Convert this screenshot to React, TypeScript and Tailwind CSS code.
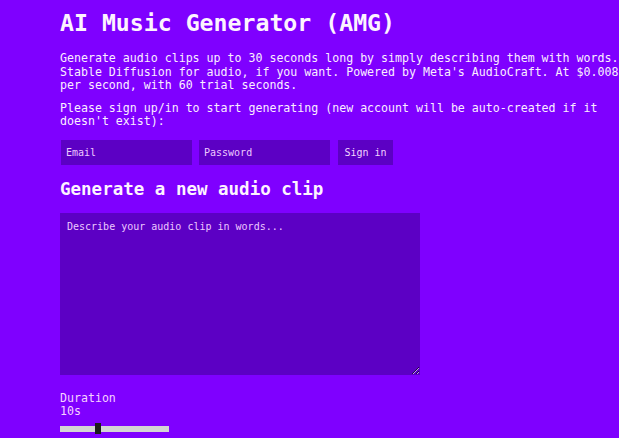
export default function App() {
  return (
    <main className="min-h-screen w-full overflow-hidden bg-[#7f00ff] text-[#fbeeff] font-['DejaVu_Sans_Mono',monospace]">
      <div className="pl-[60px] pt-[9px]">
        {/* Header */}
        <h1 className="text-[23.2px] leading-[28px] font-bold text-[#fdf3ff]">AI Music Generator (AMG)</h1>

        <p className="mt-[15px] text-[11.6px] leading-[13.6px] whitespace-nowrap">
          Generate audio clips up to 30 seconds long by simply describing them with words.
          <br />
          Stable Diffusion for audio, if you want. Powered by Meta's AudioCraft. At $0.008
          <br />
          per second, with 60 trial seconds.
        </p>

        <p className="mt-[9px] text-[11.6px] leading-[13.6px] whitespace-nowrap">
          Please sign up/in to start generating (new account will be auto-created if it
          <br />
          doesn't exist):
        </p>

        {/* Sign in */}
        <div className="mt-[11px] flex gap-[7px] pl-[1px]">
          <input
            className="w-[131px] h-[25px] bg-[#5c00c4] px-[5px] text-[10px] text-[#f2d6ff] placeholder:text-[#ecc8ff] outline-none"
            placeholder="Email"
          />
          <input
            type="password"
            className="w-[131px] h-[25px] bg-[#5c00c4] px-[5px] text-[10px] text-[#f2d6ff] placeholder:text-[#ecc8ff] outline-none"
            placeholder="Password"
          />
          <button className="ml-[1px] h-[25px] w-[55px] bg-[#5c00c4] text-[10px] text-[#f2d6ff]">Sign in</button>
        </div>

        {/* Generator */}
        <h2 className="mt-[13px] text-[17.5px] leading-[22px] font-bold text-[#fdf3ff]">Generate a new audio clip</h2>

        <textarea
          className="mt-[13px] block w-[360px] h-[162px] bg-[#5c00c4] px-[7px] py-[6px] text-[10px] text-[#f2d6ff] placeholder:text-[#ecc8ff] outline-none"
          placeholder="Describe your audio clip in words..."
        />

        <div className="mt-[17px] text-[11.6px] leading-[13px] text-[#f6d2ff]">
          <div>Duration</div>
          <div>10s</div>
        </div>

        <div className="relative mt-[8px] w-[109px] h-[6px] bg-[#d4d4d4]">
          <div className="absolute left-[35px] top-[-3px] w-[6px] h-[11px] bg-[#1c1c1c]" />
        </div>
      </div>
    </main>
  )
}
